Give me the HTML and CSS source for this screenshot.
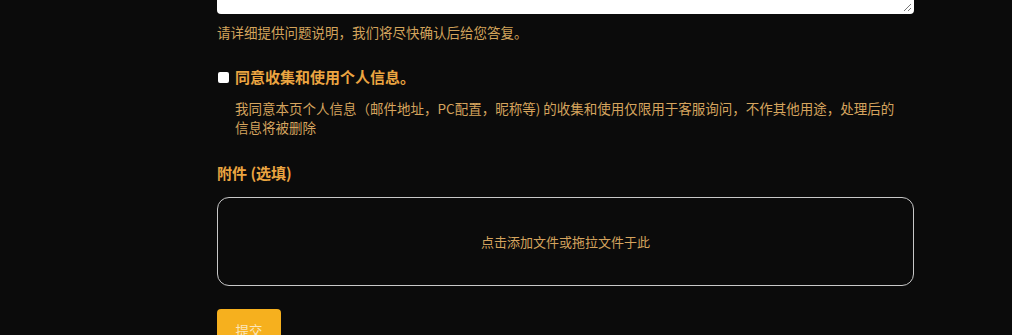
FILE: index.html
```html
<!DOCTYPE html>
<html lang="zh">
<head>
<meta charset="utf-8">
<link rel="stylesheet" href="styles.css">
</head>
<body>
<div class="form">
  <div class="textarea">
    <svg class="grip" width="9" height="9" viewBox="0 0 9 9"><path d="M8 1 L1 8 M8 5 L5 8" stroke="#777" stroke-width="1"/></svg>
  </div>
  <p class="hint">请详细提供问题说明，我们将尽快确认后给您答复。</p>
  <label class="agree">
    <span class="box"></span>
    <span class="agree-text">同意收集和使用个人信息。</span>
  </label>
  <p class="desc">我同意本页个人信息（邮件地址，PC配置，昵称等) 的收集和使用仅限用于客服询问，不作其他用途，处理后的信息将被删除</p>
  <h3 class="title">附件 (选填)</h3>
  <div class="drop">点击添加文件或拖拉文件于此</div>
  <button class="submit">提交</button>
</div>
</body>
</html>
```
FILE: styles.css
```css
html, body {
  margin: 0;
  padding: 0;
  background: #0b0b0b;
  height: 335px;
  overflow: hidden;
}
body {
  font-family: "Noto Sans CJK SC", "Microsoft YaHei", sans-serif;
}
.form {
  margin-left: 217px;
  width: 697px;
  display: flex;
  flex-direction: column;
  align-items: flex-start;
}
.textarea {
  position: relative;
  width: 697px;
  height: 14px;
  background: #fff;
  border-radius: 0 0 4px 4px;
}
.grip {
  position: absolute;
  right: 2px;
  bottom: 2px;
}
.hint {
  margin: 9px 0 0;
  font-size: 13.5px;
  line-height: 18px;
  color: #d3a45c;
}
.agree {
  margin-top: 26px;
  display: flex;
  align-items: center;
  gap: 6px;
  margin-left: 1px;
}
.box {
  width: 11px;
  height: 11px;
  background: #fff;
  border-radius: 2px;
}
.agree-text {
  font-size: 15px;
  font-weight: bold;
  line-height: 20px;
  color: #eba541;
}
.desc {
  margin: 12px 0 0 18px;
  font-size: 13.5px;
  line-height: 19px;
  color: #d5a45e;
  width: 668px;
}
.title {
  margin: 26px 0 0;
  font-size: 15px;
  font-weight: bold;
  line-height: 20px;
  color: #eba541;
}
.drop {
  margin-top: 14px;
  box-sizing: border-box;
  width: 697px;
  height: 89px;
  border: 1px solid #c8c8c8;
  border-radius: 12px;
  display: flex;
  align-items: center;
  justify-content: center;
  font-size: 13px;
  color: #d5a45e;
}
.submit {
  margin-top: 23px;
  width: 64px;
  height: 42px;
  border: none;
  border-radius: 4px;
  background: #f6b01e;
  color: #fbe6bd;
  font-family: inherit;
  font-size: 13.5px;
  padding: 0;
}
```
